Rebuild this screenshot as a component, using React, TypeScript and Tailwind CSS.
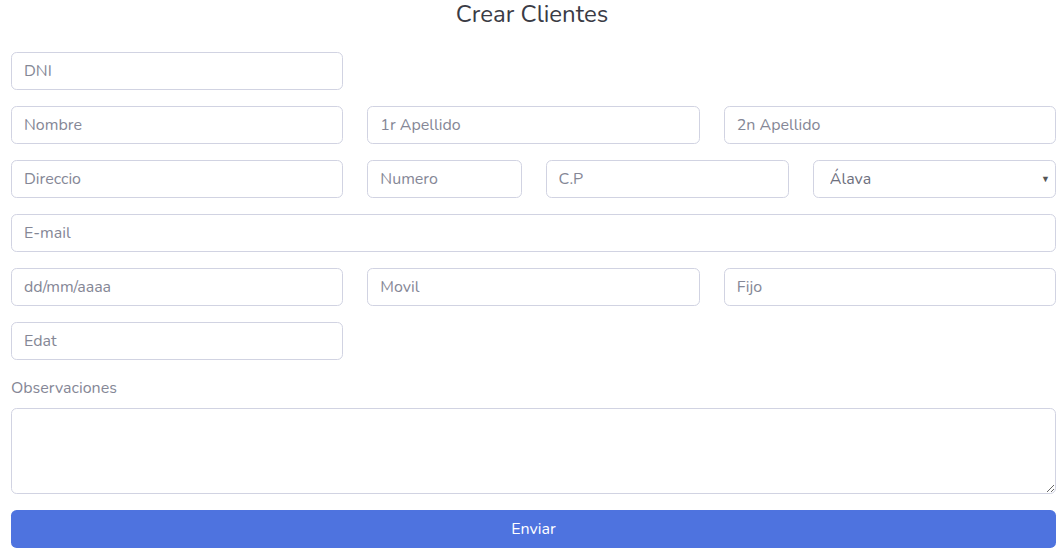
import React from 'react';

const inputCls =
    'block w-full h-[38px] px-3 bg-white border border-[#d1d3e2] rounded-[0.35rem] text-base text-[#6e707e] placeholder:text-[#858796] focus:outline-none';

const provincias = ['Álava', 'Albacete', 'Alicante', 'Almería', 'Asturias', 'Ávila'];

const App: React.FC = () => {
    return (
        <div className="min-h-screen bg-white font-['Nunito','Open_Sans',sans-serif] text-[#858796]">
            <h4 className="text-center text-2xl leading-[1.2] text-[#3a3b45]">Crear Clientes</h4>

            <form
                onSubmit={(e) => e.preventDefault()}
                className="grid grid-cols-12 gap-x-6 gap-y-4 pl-[11px] pr-[8px] pt-[23px]"
            >
                {/* DNI */}
                <div className="col-span-4">
                    <input type="text" placeholder="DNI" className={inputCls} />
                </div>
                <div className="col-span-8"></div>

                {/* Nombre y apellidos */}
                <div className="col-span-4">
                    <input type="text" placeholder="Nombre" className={inputCls} />
                </div>
                <div className="col-span-4">
                    <input type="text" placeholder="1r Apellido" className={inputCls} />
                </div>
                <div className="col-span-4">
                    <input type="text" placeholder="2n Apellido" className={inputCls} />
                </div>

                {/* Direccion */}
                <div className="col-span-4">
                    <input type="text" placeholder="Direccio" className={inputCls} />
                </div>
                <div className="col-span-2">
                    <input type="text" placeholder="Numero" className={inputCls} />
                </div>
                <div className="col-span-3">
                    <input type="text" placeholder="C.P" className={inputCls} />
                </div>
                <div className="col-span-3 relative">
                    <select defaultValue="Álava" className={`${inputCls} appearance-none pl-4`}>
                        {provincias.map((p) => (
                            <option key={p}>{p}</option>
                        ))}
                    </select>
                    <span className="pointer-events-none absolute right-[6px] top-1/2 -translate-y-1/2 text-[9px] leading-none text-[#555]">
                        ▼
                    </span>
                </div>

                {/* Email */}
                <div className="col-span-12">
                    <input type="email" placeholder="E-mail" className={inputCls} />
                </div>

                {/* Fecha y telefonos */}
                <div className="col-span-4">
                    <input type="text" placeholder="dd/mm/aaaa" className={`${inputCls} placeholder:text-[#4a4b55]`} />
                </div>
                <div className="col-span-4">
                    <input type="tel" placeholder="Movil" className={inputCls} />
                </div>
                <div className="col-span-4">
                    <input type="tel" placeholder="Fijo" className={inputCls} />
                </div>

                {/* Edat */}
                <div className="col-span-4">
                    <input type="number" placeholder="Edat" className={inputCls} />
                </div>
                <div className="col-span-8"></div>

                {/* Observaciones */}
                <div className="col-span-12">
                    <label htmlFor="obs" className="block text-base leading-6 mb-2 text-[#858796]">
                        Observaciones
                    </label>
                    <textarea
                        id="obs"
                        rows={3}
                        className="block w-full h-[86px] px-3 py-1.5 bg-white border border-[#d1d3e2] rounded-[0.35rem] text-base text-[#6e707e] focus:outline-none"
                    />
                </div>

                <div className="col-span-12">
                    <button
                        type="submit"
                        className="w-full h-[38px] rounded-[0.35rem] bg-[#4e73df] text-white text-base"
                    >
                        Enviar
                    </button>
                </div>
            </form>
        </div>
    );
};

export default App;
